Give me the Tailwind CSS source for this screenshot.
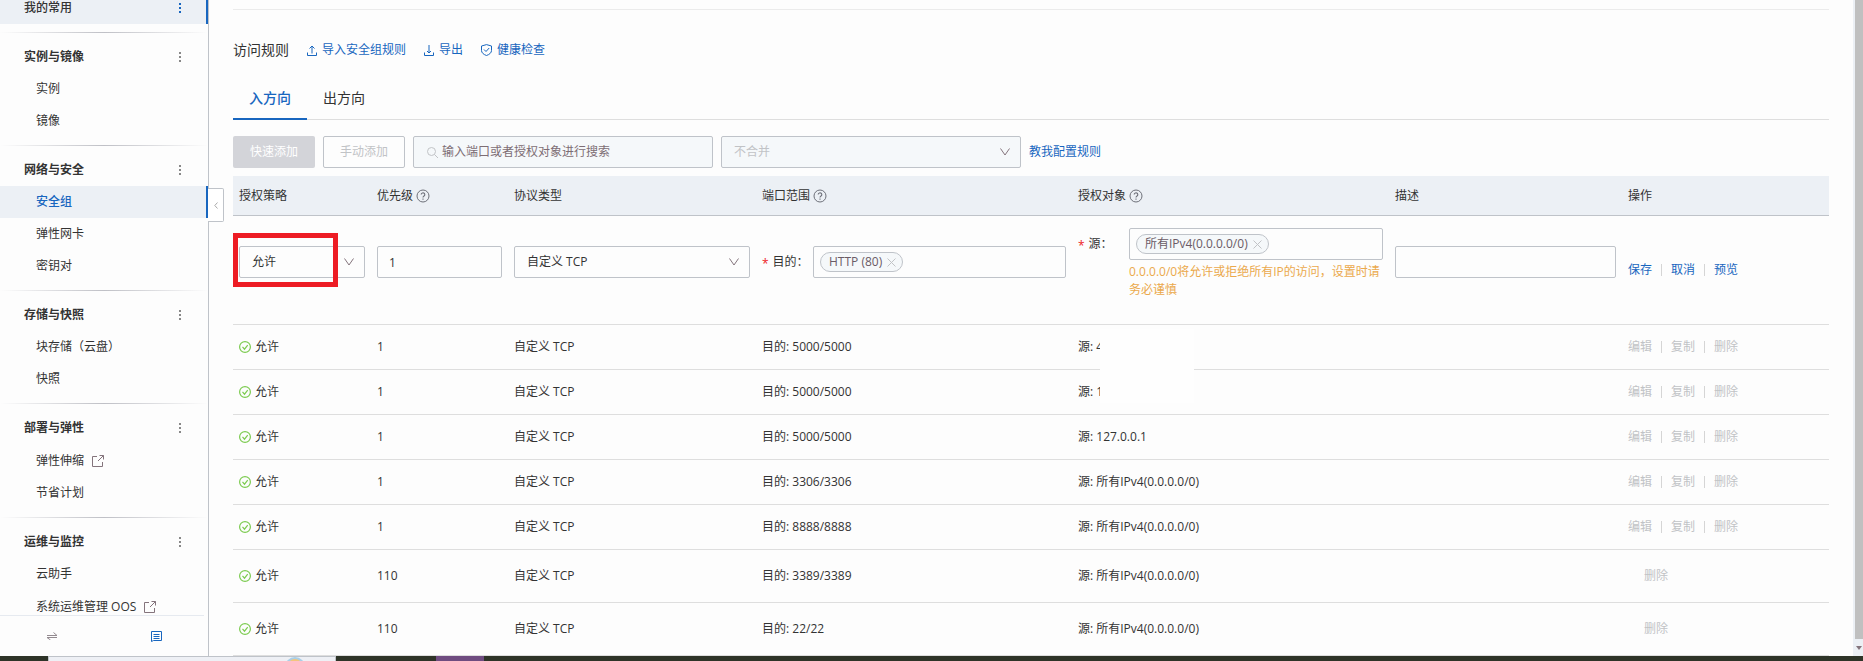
<!DOCTYPE html>
<html lang="zh-CN">
<head>
<meta charset="utf-8">
<title>安全组 - 访问规则</title>
<script src="https://cdn.jsdelivr.net/npm/@tailwindcss/browser@4"></script>
</head>
<body class="h-screen flex flex-col overflow-hidden bg-[#fdfdfd] text-[#333] text-xs font-['Open_Sans','Noto_Sans_CJK_SC',sans-serif]">
<svg class="hidden">
  <symbol id="more" viewBox="0 0 2 11"><path d="M0 0h2v2H0zM0 4h2v2H0zM0 8h2v2H0z" fill="currentColor"/></symbol>
  <symbol id="ext" viewBox="0 0 12 12"><path d="M5 1.500H.5v10h10V7M7.500.5h4v4M11.500.5 6 6" fill="none" stroke="currentColor"/></symbol>
  <symbol id="help" viewBox="0 0 14 14"><circle cx="7" cy="7" r="6" fill="none" stroke="currentColor"/><path d="M5.200 5.600a1.800 1.700 0 1 1 2.800 1.400c-.6.4-1 .7-1 1.400M7 9.500v1.200" fill="none" stroke="currentColor" stroke-width="1.100"/></symbol>
  <symbol id="down" viewBox="0 0 10 8"><path d="M.5.500 5 7 9.500.5" fill="none" stroke="currentColor"/></symbol>
  <symbol id="x" viewBox="0 0 9 9"><path d="M.5.500l8 8M8.500.500l-8 8" fill="none" stroke="currentColor"/></symbol>
  <symbol id="ok" viewBox="0 0 12 12"><circle cx="6" cy="6" r="5.400" fill="none" stroke="currentColor" stroke-width="1.200"/><path d="M3.500 5.800l2 2.400 3.200-4" fill="none" stroke="currentColor" stroke-width="1.200"/></symbol>
</svg>
<div class="flex-1 min-h-0 flex">
  <aside class="relative w-[209px] shrink-0 border-r border-[#bfc3c9] flex flex-col">
    <nav class="flex-1 min-h-0 overflow-hidden" aria-label="产品导航">
      <div class="h-6 pb-2 pl-6 pr-[25px] flex items-center justify-between bg-[#ecf0f5] border-r-2 border-[#1866bf] font-medium"><a href="#">我的常用</a><button aria-label="更多" class="text-[#1866bf]"><svg class="w-[2px] h-[11px]"><use href="#more"/></svg></button></div>
      <div class="h-2"></div>
      <div class="h-px bg-linear-to-r from-transparent via-[#bfc0c6] to-transparent"></div>
      <section class="py-2">
        <div class="h-8 pl-6 pr-[27px] flex items-center justify-between"><h3 class="font-bold">实例与镜像</h3><button aria-label="更多" class="text-[#888]"><svg class="w-[2px] h-[11px]"><use href="#more"/></svg></button></div>
        <a href="#" class="h-8 pl-9 flex items-center">实例</a>
        <a href="#" class="h-8 pl-9 flex items-center">镜像</a>
      </section>
      <div class="h-px bg-linear-to-r from-transparent via-[#bfc0c6] to-transparent"></div>
      <section class="py-2">
        <div class="h-8 pl-6 pr-[27px] flex items-center justify-between"><h3 class="font-bold">网络与安全</h3><button aria-label="更多" class="text-[#888]"><svg class="w-[2px] h-[11px]"><use href="#more"/></svg></button></div>
        <a href="#" class="h-8 pl-9 flex items-center bg-[#ecf0f5] border-r-2 border-[#1866bf] text-[#1866bf] font-medium">安全组</a>
        <a href="#" class="h-8 pl-9 flex items-center">弹性网卡</a>
        <a href="#" class="h-8 pl-9 flex items-center">密钥对</a>
      </section>
      <div class="h-px bg-linear-to-r from-transparent via-[#bfc0c6] to-transparent"></div>
      <section class="py-2">
        <div class="h-8 pl-6 pr-[27px] flex items-center justify-between"><h3 class="font-bold">存储与快照</h3><button aria-label="更多" class="text-[#888]"><svg class="w-[2px] h-[11px]"><use href="#more"/></svg></button></div>
        <a href="#" class="h-8 pl-9 flex items-center">块存储（云盘）</a>
        <a href="#" class="h-8 pl-9 flex items-center">快照</a>
      </section>
      <div class="h-px bg-linear-to-r from-transparent via-[#bfc0c6] to-transparent"></div>
      <section class="py-2">
        <div class="h-8 pl-6 pr-[27px] flex items-center justify-between"><h3 class="font-bold">部署与弹性</h3><button aria-label="更多" class="text-[#888]"><svg class="w-[2px] h-[11px]"><use href="#more"/></svg></button></div>
        <a href="#" class="h-[33px] pl-9 flex items-center gap-2">弹性伸缩<svg class="size-3 text-[#84747c]"><use href="#ext"/></svg></a>
        <a href="#" class="h-8 pl-9 flex items-center">节省计划</a>
      </section>
      <div class="h-px bg-linear-to-r from-transparent via-[#bfc0c6] to-transparent"></div>
      <section class="pt-2">
        <div class="h-8 pl-6 pr-[27px] flex items-center justify-between"><h3 class="font-bold">运维与监控</h3><button aria-label="更多" class="text-[#888]"><svg class="w-[2px] h-[11px]"><use href="#more"/></svg></button></div>
        <a href="#" class="h-8 pl-9 flex items-center">云助手</a>
        <a href="#" class="h-[33px] pl-9 flex items-center gap-2">系统运维管理 OOS<svg class="size-3 text-[#84747c]"><use href="#ext"/></svg></a>
      </section>
    </nav>
    <div class="h-[41px] mr-1 shrink-0 border-t border-[#e6eaf0] flex items-center justify-between pl-[47px] pr-[42px]">
      <button aria-label="切换" class="text-[#938a90]"><svg class="w-[10px] h-[8px]" viewBox="0 0 10 8" fill="none" stroke="currentColor"><path d="M0 3.500h10L6.500.500M10 5.500H0l3.500 2.500"/></svg></button>
      <button aria-label="列表" class="text-[#1866bf]"><svg class="w-[11px] h-[11px]" viewBox="0 0 11 11" fill="none" stroke="currentColor"><path d="M.5.500h10v9H2.500L.5 10.500zM2.500 3.500h6M2.500 5.500h6M2.500 7.500h6"/></svg></button>
    </div>
    <button aria-label="收起导航" class="absolute left-[208px] top-[188px] w-4 h-[34px] border border-l-0 border-[#bfc3c9] rounded-r-xs bg-white flex items-center justify-center text-[#aaa]"><svg class="w-[4px] h-[7px]" viewBox="0 0 4 7" fill="none" stroke="currentColor"><path d="M3.500.500.800 3.500l2.700 3"/></svg></button>
  </aside>

  <main class="flex-1 min-w-0 overflow-hidden px-6 pt-[9px]">
    <div class="h-px bg-[#ebebeb]"></div>
    <div class="mt-6 h-8 flex items-center gap-[18px]">
      <h2 class="text-sm">访问规则</h2>
      <a href="#" class="flex items-center gap-[5px] text-[#1866bf]"><svg class="w-[10px] h-[11px]" viewBox="0 0 10 11" fill="none" stroke="currentColor"><path d="M.5 7.500v3h9v-3M5 8.500V1M2.500 3.500 5 1l2.500 2.500"/></svg>导入安全组规则</a>
      <a href="#" class="flex items-center gap-[5px] text-[#1866bf]"><svg class="w-[10px] h-[11px]" viewBox="0 0 10 11" fill="none" stroke="currentColor"><path d="M.5 7.500v3h9v-3M5 0v8M3 6l2 2 2-2"/></svg>导出</a>
      <a href="#" class="flex items-center gap-[5px] text-[#1866bf]"><svg class="w-[11px] h-[12px]" viewBox="0 0 11 12" fill="none" stroke="currentColor"><path d="M5.500.600 10.500 2v4.500c0 2.200-2 4-5 5-3-1-5-2.800-5-5V2zM3 5.500l2 2 3.200-3.500"/></svg>健康检查</a>
    </div>
    <div role="tablist" class="mt-[10px] h-11 flex text-sm shadow-[inset_0_-1px_#dedede]">
      <button role="tab" aria-selected="true" class="px-4 pt-[2px] border-b-2 border-[#1866bf] text-[#1866bf] font-medium">入方向</button>
      <button role="tab" aria-selected="false" class="px-4">出方向</button>
    </div>
    <div class="mt-4 flex items-center gap-2">
      <button disabled class="h-8 w-[82px] rounded-xs bg-[#d3d4d9] text-white">快速添加</button>
      <button disabled class="h-8 w-[82px] rounded-xs border border-[#bfc3c9] text-[#c1c3c6]">手动添加</button>
      <label class="h-8 w-[300px] rounded-xs border border-[#bfc3c9] bg-[#f5f8fa] flex items-center gap-1 pl-[13px] pr-2 text-[#c1c3c6]">
        <svg class="size-[11px] shrink-0" viewBox="0 0 11 11" fill="none" stroke="currentColor"><circle cx="4.500" cy="4.500" r="4"/><path d="M7.500 7.500 11 11"/></svg>
        <input disabled aria-label="搜索规则" placeholder="输入端口或者授权对象进行搜索" class="flex-1 min-w-0 outline-none placeholder:text-[#7d6d74]">
      </label>
      <div class="grid w-[300px] items-center">
        <select disabled aria-label="合并方式" class="col-start-1 row-start-1 h-8 w-full appearance-none rounded-xs border border-[#bfc3c9] bg-[#f5f8fa] pl-3 text-[#c1c3c6] opacity-100"><option>不合并</option></select>
        <svg class="col-start-1 row-start-1 justify-self-end mr-[11px] w-[10px] h-[8px] text-[#84747c] pointer-events-none"><use href="#down"/></svg>
      </div>
      <a href="#" class="text-[#1866bf]">教我配置规则</a>
    </div>

    <table class="mt-2 w-full table-fixed border-separate border-spacing-0 text-left [&_td]:px-[6px] [&_td]:border-b [&_td]:border-[#dedede] [&_td]:py-0">
      <colgroup><col class="w-[138px]"><col class="w-[137px]"><col class="w-[248px]"><col class="w-[316px]"><col class="w-[317px]"><col><col class="w-[207px]"></colgroup>
      <thead>
        <tr class="h-10 bg-[#ecf0f5] [&>th]:px-[6px] [&>th]:py-0 [&>th]:font-normal [&>th]:border-b [&>th]:border-[#bfc3c9]">
          <th>授权策略</th>
          <th><span class="flex items-center gap-[3px]">优先级<svg class="size-[14px] text-[#6e7079]"><use href="#help"/></svg></span></th>
          <th>协议类型</th>
          <th><span class="flex items-center gap-[3px]">端口范围<svg class="size-[14px] text-[#6e7079]"><use href="#help"/></svg></span></th>
          <th><span class="flex items-center gap-[3px]">授权对象<svg class="size-[14px] text-[#6e7079]"><use href="#help"/></svg></span></th>
          <th>描述</th>
          <th>操作</th>
        </tr>
      </thead>
      <tbody>
        <tr class="h-[109px]">
          <td>
            <div class="relative mb-4 grid items-center">
              <select aria-label="授权策略" class="col-start-1 row-start-1 h-8 w-full appearance-none rounded-xs border border-[#bfc3c9] pl-3"><option>允许</option></select>
              <svg class="col-start-1 row-start-1 justify-self-end mr-[11px] w-[10px] h-[8px] text-[#84747c] pointer-events-none"><use href="#down"/></svg>
              <span class="absolute -left-[6px] -top-[13px] w-[105px] h-[54px] border-5 border-[#ed1c24] pointer-events-none"></span>
            </div>
          </td>
          <td><input aria-label="优先级" value="1" class="block mb-4 h-8 w-full rounded-xs border border-[#bfc3c9] px-[11px]"></td>
          <td>
            <div class="mb-4 grid items-center">
              <select aria-label="协议类型" class="col-start-1 row-start-1 h-8 w-full appearance-none rounded-xs border border-[#bfc3c9] pl-3"><option>自定义 TCP</option></select>
              <svg class="col-start-1 row-start-1 justify-self-end mr-[11px] w-[10px] h-[8px] text-[#84747c] pointer-events-none"><use href="#down"/></svg>
            </div>
          </td>
          <td>
            <div class="mb-4 flex items-center">
              <label for="port" class="w-[51px] shrink-0 flex gap-1 items-center"><span class="text-[#ed1c24] h-3 leading-4">*</span>目的：</label>
              <div class="flex-1 min-w-0 h-8 rounded-xs border border-[#bfc3c9] flex items-center pl-[6px]">
                <span class="h-5 shrink-0 rounded-full border border-[#bfc3c9] bg-[#f5f8fa] flex items-center gap-[5px] pl-2 pr-[6px] text-[#6b5b66]">HTTP (80)<button aria-label="移除 HTTP (80)" class="text-[#c1c3c6]"><svg class="size-[9px]"><use href="#x"/></svg></button></span>
                <input id="port" class="flex-1 min-w-0 outline-none">
              </div>
            </div>
          </td>
          <td>
            <div class="flex items-start">
              <label for="source" class="w-[51px] h-8 shrink-0 flex gap-1 items-center"><span class="text-[#ed1c24] h-3 leading-4">*</span>源：</label>
              <div class="flex-1 min-w-0">
                <div class="h-8 rounded-xs border border-[#bfc3c9] flex items-center pl-[6px]">
                  <span class="h-5 shrink-0 rounded-full border border-[#bfc3c9] bg-[#f5f8fa] flex items-center gap-[5px] pl-2 pr-[6px] text-[#6b5b66]">所有IPv4(0.0.0.0/0)<button aria-label="移除来源" class="text-[#c1c3c6]"><svg class="size-[9px]"><use href="#x"/></svg></button></span>
                  <input id="source" class="flex-1 min-w-0 outline-none">
                </div>
                <p class="mt-[3px] mb-[13px] leading-[18px] text-[#eba94c]">0.0.0.0/0将允许或拒绝所有IP的访问，设置时请务必谨慎</p>
              </div>
            </div>
          </td>
          <td><input aria-label="描述" class="block mb-4 h-8 w-full rounded-xs border border-[#bfc3c9] px-[11px]"></td>
          <td><div class="flex items-center text-[#1866bf]"><button>保存</button><span class="w-px h-3 mx-[9px] bg-[#d5d5d5]"></span><button>取消</button><span class="w-px h-3 mx-[9px] bg-[#d5d5d5]"></span><button>预览</button></div></td>
        </tr>
        <tr class="h-[45px]">
          <td><span class="flex items-center gap-1"><svg class="size-3 text-[#7ccb50]"><use href="#ok"/></svg>允许</span></td><td>1</td><td>自定义 TCP</td><td>目的: 5000/5000</td>
          <td><div class="relative">源: 4<span class="absolute left-[22px] -top-[10px] w-[94px] h-[74px] bg-[#fefefe]"></span></div></td><td></td>
          <td><div class="flex items-center text-[#c1c3c6]"><button disabled>编辑</button><span class="w-px h-3 mx-[9px] bg-[#d5d5d5]"></span><button disabled>复制</button><span class="w-px h-3 mx-[9px] bg-[#d5d5d5]"></span><button disabled>删除</button></div></td>
        </tr>
        <tr class="h-[45px]">
          <td><span class="flex items-center gap-1"><svg class="size-3 text-[#7ccb50]"><use href="#ok"/></svg>允许</span></td><td>1</td><td>自定义 TCP</td><td>目的: 5000/5000</td><td>源: 1</td><td></td>
          <td><div class="flex items-center text-[#c1c3c6]"><button disabled>编辑</button><span class="w-px h-3 mx-[9px] bg-[#d5d5d5]"></span><button disabled>复制</button><span class="w-px h-3 mx-[9px] bg-[#d5d5d5]"></span><button disabled>删除</button></div></td>
        </tr>
        <tr class="h-[45px]">
          <td><span class="flex items-center gap-1"><svg class="size-3 text-[#7ccb50]"><use href="#ok"/></svg>允许</span></td><td>1</td><td>自定义 TCP</td><td>目的: 5000/5000</td><td>源: 127.0.0.1</td><td></td>
          <td><div class="flex items-center text-[#c1c3c6]"><button disabled>编辑</button><span class="w-px h-3 mx-[9px] bg-[#d5d5d5]"></span><button disabled>复制</button><span class="w-px h-3 mx-[9px] bg-[#d5d5d5]"></span><button disabled>删除</button></div></td>
        </tr>
        <tr class="h-[45px]">
          <td><span class="flex items-center gap-1"><svg class="size-3 text-[#7ccb50]"><use href="#ok"/></svg>允许</span></td><td>1</td><td>自定义 TCP</td><td>目的: 3306/3306</td><td>源: 所有IPv4(0.0.0.0/0)</td><td></td>
          <td><div class="flex items-center text-[#c1c3c6]"><button disabled>编辑</button><span class="w-px h-3 mx-[9px] bg-[#d5d5d5]"></span><button disabled>复制</button><span class="w-px h-3 mx-[9px] bg-[#d5d5d5]"></span><button disabled>删除</button></div></td>
        </tr>
        <tr class="h-[45px]">
          <td><span class="flex items-center gap-1"><svg class="size-3 text-[#7ccb50]"><use href="#ok"/></svg>允许</span></td><td>1</td><td>自定义 TCP</td><td>目的: 8888/8888</td><td>源: 所有IPv4(0.0.0.0/0)</td><td></td>
          <td><div class="flex items-center text-[#c1c3c6]"><button disabled>编辑</button><span class="w-px h-3 mx-[9px] bg-[#d5d5d5]"></span><button disabled>复制</button><span class="w-px h-3 mx-[9px] bg-[#d5d5d5]"></span><button disabled>删除</button></div></td>
        </tr>
        <tr class="h-[53px]">
          <td><span class="flex items-center gap-1"><svg class="size-3 text-[#7ccb50]"><use href="#ok"/></svg>允许</span></td><td>110</td><td>自定义 TCP</td><td>目的: 3389/3389</td><td>源: 所有IPv4(0.0.0.0/0)</td><td></td>
          <td><button disabled class="px-4 text-[#c1c3c6]">删除</button></td>
        </tr>
        <tr class="h-[53px]">
          <td><span class="flex items-center gap-1"><svg class="size-3 text-[#7ccb50]"><use href="#ok"/></svg>允许</span></td><td>110</td><td>自定义 TCP</td><td>目的: 22/22</td><td>源: 所有IPv4(0.0.0.0/0)</td><td></td>
          <td><button disabled class="px-4 text-[#c1c3c6]">删除</button></td>
        </tr>
      </tbody>
    </table>
  </main>

  <div class="w-[10px] shrink-0 bg-[#ecf0f5] pl-[2px] flex flex-col" aria-hidden="true">
    <div class="flex-1 bg-[#c0c0c0]"></div>
    <div class="h-[17px] flex items-center justify-center text-[#84747c]"><svg class="w-[6px] h-[4px]" viewBox="0 0 6 4"><path d="M0 0h6L3 4z" fill="currentColor"/></svg></div>
  </div>
</div>
<div class="h-[5px] shrink-0 flex bg-[#2e3428]" aria-hidden="true">
  <div class="ml-12 w-[288px] flex justify-end pr-[30px] bg-[#eef0f5] border-t border-x border-[#bfc3c9] overflow-hidden"><span class="w-5 h-5 rounded-full border-2 border-[#a9cfe8] bg-[#f3c57c] shrink-0"></span></div>
  <div class="ml-[100px] w-12 bg-[#6f4c80]"></div>
</div>
</body>
</html>
